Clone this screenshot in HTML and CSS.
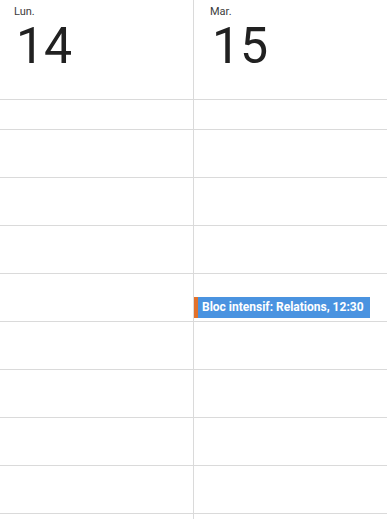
FILE: index.html
```html
<!DOCTYPE html>
<html>
<head>
<meta charset="utf-8">
<link rel="stylesheet" href="styles.css">
</head>
<body>
<div class="cal">
  <div class="col">
    <div class="head">
      <div class="dow">Lun.</div>
      <div class="num">14</div>
    </div>
    <div class="allday"></div>
    <div class="hour"></div>
    <div class="hour"></div>
    <div class="hour"></div>
    <div class="hour"></div>
    <div class="hour"></div>
    <div class="hour"></div>
    <div class="hour"></div>
    <div class="hour"></div>
  </div>
  <div class="col second">
    <div class="head">
      <div class="dow">Mar.</div>
      <div class="num">15</div>
    </div>
    <div class="allday"></div>
    <div class="hour"></div>
    <div class="hour"></div>
    <div class="hour"></div>
    <div class="hour event-hour">
      <div class="event">Bloc intensif: Relations, 12:30</div>
    </div>
    <div class="hour"></div>
    <div class="hour"></div>
    <div class="hour"></div>
    <div class="hour"></div>
  </div>
</div>
</body>
</html>
```
FILE: styles.css
```css
html, body {
  margin: 0;
  padding: 0;
  background: #fff;
  font-family: Roboto, "Liberation Sans", sans-serif;
  overflow: hidden;
}
.cal {
  display: grid;
  grid-template-columns: 193px 194px;
  width: 387px;
  height: 519px;
}
.col.second {
  border-left: 1px solid #dadada;
}
.head {
  height: 99px;
  border-bottom: 1px solid #dadada;
  box-sizing: border-box;
  height: 100px;
  padding: 5px 0 0 14px;
}
.second .head {
  padding-left: 16px;
}
.dow {
  font-size: 11px;
  color: #3c3c3c;
  line-height: 14px;
}
.num {
  font-size: 50px;
  line-height: 50px;
  color: #212121;
  margin-top: 2px;
  margin-left: 2px;
}
.allday {
  height: 29px;
  border-bottom: 1px solid #dadada;
}
.hour {
  height: 47px;
  border-bottom: 1px solid #dadada;
  position: relative;
}
.event {
  position: absolute;
  top: 23px;
  left: 0;
  width: 176px;
  height: 21px;
  box-sizing: border-box;
  background: #4a93e0;
  border-left: 4px solid #e2722c;
  color: #fff;
  font-weight: 700;
  font-size: 12px;
  line-height: 21px;
  padding-left: 4px;
  white-space: nowrap;
  overflow: hidden;
}
```
